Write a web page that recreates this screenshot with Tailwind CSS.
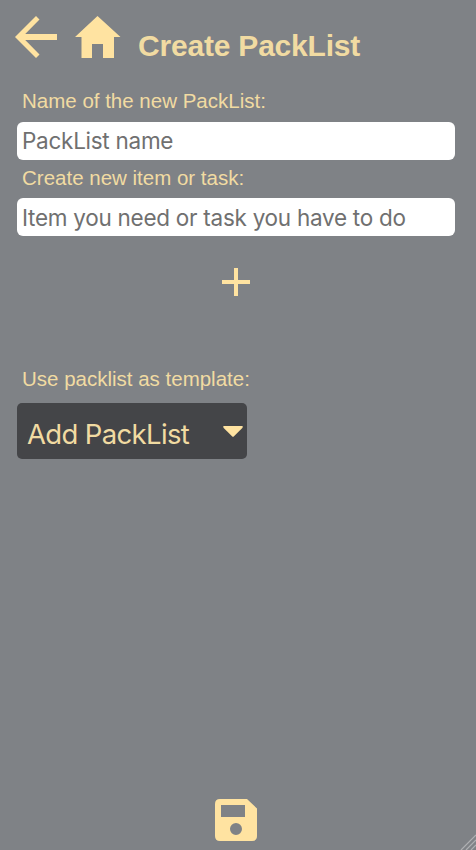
<!DOCTYPE html>
<html lang="en">
<head>
<meta charset="utf-8">
<title>Create PackList</title>
<script src="https://cdn.jsdelivr.net/npm/@tailwindcss/browser@4"></script>
</head>
<body class="bg-[#7f8286] overflow-hidden">
<main class="relative flex h-[850px] w-[476px] flex-col overflow-hidden font-['Liberation_Sans',sans-serif] text-[#f1dba2]">
  <header class="flex h-[60px] shrink-0 items-start pl-[15px] pt-4">
    <svg class="h-[42px] w-[42px] shrink-0" viewBox="0 0 42 42" fill="#ffe3a1"><path d="M21 0L24.5 3.4L10.2 18H42V24H10.2L24.5 38.6L21 42L0 21Z"/></svg>
    <svg class="ml-[18px] h-[42px] w-[46px] shrink-0" viewBox="0 0 46 42" fill="#ffe3a1"><path d="M22.500 0L45.500 21H39V42H28V28H17V42H6.500V21H0Z"/></svg>
    <h1 class="ml-[17px] mt-[13px] whitespace-nowrap text-[30px] font-bold leading-[34px] tracking-[-0.2px]">Create PackList</h1>
  </header>
  <form class="flex flex-col pl-[17px] pr-[21px]">
    <label class="mt-[29px] h-6 pl-[5px] text-[20.5px] leading-6">Name of the new PackList:</label>
    <input class="mt-[9px] h-[38px] rounded-[6px] bg-white px-[5px] pb-[2px] font-['Inter',sans-serif] text-[22.5px] tracking-[-0.27px] placeholder:text-[#707070]" placeholder="PackList name">
    <label class="mt-[6px] h-6 pl-[5px] text-[20.5px] leading-6">Create new item or task:</label>
    <input class="mt-[8px] h-[38px] rounded-[6px] bg-white px-[5px] font-['Inter',sans-serif] text-[22.5px] tracking-[-0.27px] placeholder:text-[#707070]" placeholder="Item you need or task you have to do">
    <button type="button" aria-label="Add item" class="mt-8 self-center"><svg class="h-7 w-7" viewBox="0 0 28 28" fill="#ffe3a1"><path d="M12 0H16V12H28V16H16V28H12V16H0V12H12Z"/></svg></button>
    <label class="mt-[71px] h-6 pl-[5px] text-[20.5px] leading-6">Use packlist as template:</label>
    <button type="button" class="mt-3 flex h-14 w-[230px] items-center justify-between rounded-[5px] bg-[#444548] pl-[10px] pr-[4px]">
      <span class="mt-[5px] whitespace-nowrap font-['Inter',sans-serif] text-[27.5px] leading-8 tracking-[-0.65px]">Add PackList</span>
      <svg class="h-[11px] w-5" viewBox="0 0 20 11" fill="#ffe3a1"><path d="M1 0H19Q20.500 .5 19.300 2L11 10.300Q10 11.300 9 10.300L.7 2Q-.5 .5 1 0Z"/></svg>
    </button>
  </form>
  <footer class="mt-auto flex justify-center pb-[9px] pr-[4px]">
    <svg class="h-[42px] w-[42px]" viewBox="0 0 42 42" fill="#ffe3a1" fill-rule="evenodd"><path d="M5 0H32L42 9.500V37Q42 42 37 42H5Q0 42 0 37V5Q0 0 5 0ZM6 6V18H30V6ZM21 24A6 6 0 1 0 21 36A6 6 0 1 0 21 24Z"/></svg>
  </footer>
  <svg class="absolute bottom-0 right-0 h-4 w-4" viewBox="0 0 16 16" fill="none" stroke="#b0b1b3" stroke-width="1.2"><path d="M1 16L16 1M6 16L16 6M11 16L16 11"/></svg>
</main>
</body>
</html>
